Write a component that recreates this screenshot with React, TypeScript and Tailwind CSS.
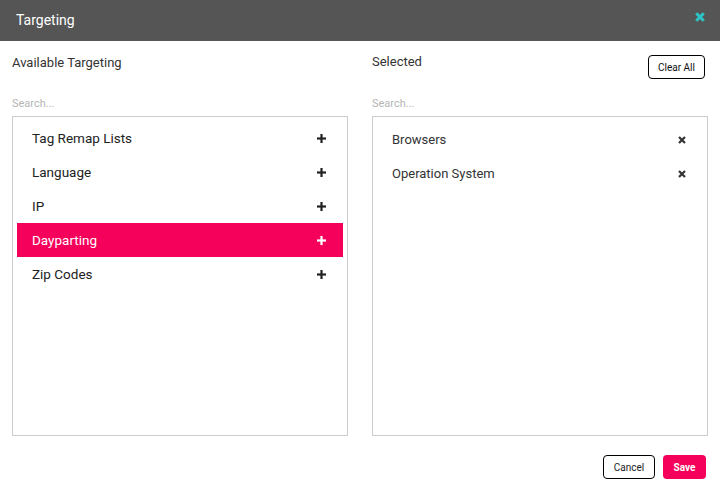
import React from 'react';

const available = ['Tag Remap Lists', 'Language', 'IP', 'Dayparting', 'Zip Codes'];
const selected = ['Browsers', 'Operation System'];

const PlusIcon: React.FC = () => (
  <svg width="9" height="9" viewBox="0 0 9 9" fill="currentColor">
    <rect x="3.4" y="0" width="2.2" height="9" />
    <rect x="0" y="3.4" width="9" height="2.2" />
  </svg>
);

const XIcon: React.FC<{ size?: number; stroke?: number }> = ({ size = 8, stroke = 2.2 }) => (
  <svg width={size} height={size} viewBox="0 0 8 8" fill="none" stroke="currentColor" strokeWidth={stroke}>
    <path d="M1 1 L7 7 M7 1 L1 7" />
  </svg>
);

export default function App() {
  return (
    <div className="w-[720px] h-[493px] bg-white flex flex-col text-[#222]" style={{ fontFamily: 'Roboto, "Liberation Sans", sans-serif' }}>
      <div className="h-[41px] bg-[#555555] flex items-center justify-between pl-4 pr-[15px] shrink-0">
        <span className="text-white text-[14px]">Targeting</span>
        <span className="text-[#2cc4c9] mb-2">
          <XIcon size={10} stroke={2.4} />
        </span>
      </div>

      <div className="flex gap-6 px-3 pt-[14px]">
        <div className="w-[336px] flex flex-col">
          <div className="h-6 flex items-start">
            <span className="text-[13px] leading-4 text-[#333]">Available Targeting</span>
          </div>
          <input
            placeholder="Search..."
            className="mt-[15px] h-[18px] text-[11px] outline-none placeholder:text-[#b5b5b5]"
          />
          <div className="mt-1 h-[320px] border border-[#cccccc] p-1">
            {available.map((item) => {
              const active = item === 'Dayparting';
              return (
                <div
                  key={item}
                  className={`h-[34px] flex items-center justify-between pl-[15px] pr-[17px] pt-[1px] text-[13.5px] ${
                    active ? 'bg-[#f5005a] text-white' : 'text-[#222]'
                  }`}
                >
                  <span>{item}</span>
                  <PlusIcon />
                </div>
              );
            })}
          </div>
        </div>

        <div className="w-[336px] flex flex-col">
          <div className="h-6 flex items-start justify-between">
            <span className="text-[13px] leading-[14px] text-[#333]">Selected</span>
            <button className="h-6 w-[57px] mr-[3px] border border-black rounded-sm text-[10px] text-[#111]">
              Clear All
            </button>
          </div>
          <input
            placeholder="Search..."
            className="mt-[15px] h-[18px] text-[11px] outline-none placeholder:text-[#b5b5b5]"
          />
          <div className="mt-1 h-[320px] border border-[#cccccc] p-1">
            {selected.map((item) => (
              <div key={item} className="h-[34px] flex items-center justify-between pl-[15px] pr-[17px] pt-[4px] text-[13px] text-[#333]">
                <span>{item}</span>
                <XIcon size={8} stroke={2.2} />
              </div>
            ))}
          </div>
        </div>
      </div>

      <div className="flex justify-end gap-2 pr-[14px] pt-[19px]">
        <button className="h-6 w-[52px] border border-black rounded-sm text-[10px] text-[#222]">Cancel</button>
        <button className="h-6 w-[43px] bg-[#f5005a] rounded-sm text-[10px] font-bold text-white">Save</button>
      </div>
    </div>
  );
}
